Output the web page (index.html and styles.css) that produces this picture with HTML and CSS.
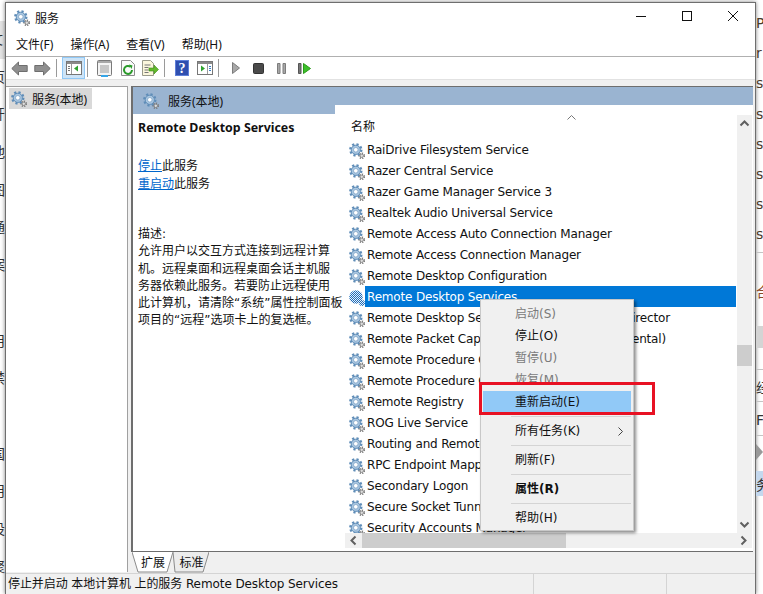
FILE: index.html
```html
<!DOCTYPE html>
<html lang="zh-CN">
<head>
    <meta charset="UTF-8">
    <title>服务</title>
    <link rel="stylesheet" href="styles.css">
</head>
<body>

    <svg class="defs" width="0" height="0">
        <defs>
            <pattern id="dither" width="2" height="2" patternUnits="userSpaceOnUse">
                <rect width="2" height="2" fill="#e8f1fa"/>
                <rect width="1" height="1" fill="#1d6bb8"/>
                <rect x="1" y="1" width="1" height="1" fill="#1d6bb8"/>
            </pattern>
            <symbol id="gear" viewBox="0 0 16 16">
                <circle cx="6.8" cy="6.8" r="5.4" fill="none" stroke="#5f8db8" stroke-width="2.6" stroke-dasharray="2.1 2.14"/>
                <circle cx="6.8" cy="6.8" r="4.6" fill="#a9c6e0" stroke="#5f8db8"/>
                <circle cx="6.800" cy="6.8" r="2.3" fill="#ffffff" stroke="#7fa3c6" stroke-width=".8"/>
                <circle cx="12.8" cy="12.8" r="2.6" fill="none" stroke="#7c7c7c" stroke-width="1.5" stroke-dasharray="1.2 1.2"/>
                <circle cx="12.8" cy="12.8" r="1.7" fill="#dcdcdc" stroke="#707070" stroke-width=".7"/>
            </symbol>
            <symbol id="gear-sel" viewBox="0 0 16 16">
                <circle cx="7" cy="7" r="6.800" fill="url(#dither)"/>
                <circle cx="13" cy="13" r="3" fill="url(#dither)"/>
            </symbol>
        </defs>
    </svg>

    <div class="desk">
        <div class="strip-left">
            <span class="band">文</span><span>页</span><span>开</span><span>他</span><span>图</span><span>通</span><span>案</span><span>&nbsp;</span><span>用</span><span>禁</span><span>&nbsp;</span><span>国</span><span>用</span><span>设</span><span>聚</span>
        </div>

        <div class="window">
            <div class="titlebar">
                <svg class="icon"><use href="#gear"/></svg>
                <span class="title">服务</span>
                <div class="caption">
                    <svg width="46" height="20" viewBox="0 0 46 20"><path d="M18 10.5h10" stroke="#111" fill="none"/></svg>
                    <svg width="46" height="20" viewBox="0 0 46 20"><rect x="18.5" y="5.5" width="9" height="9" stroke="#111" fill="none"/></svg>
                    <svg width="46" height="20" viewBox="0 0 46 20"><path d="M18 5l10 10M28 5l-10 10" stroke="#111" fill="none"/></svg>
                </div>
            </div>

            <div class="menubar">
                <span>文件(F)</span>
                <span>操作(A)</span>
                <span>查看(V)</span>
                <span>帮助(H)</span>
            </div>

            <div class="toolbar">
                <span class="tool"><svg width="17" height="15" viewBox="0 0 17 15"><path d="M.8 7.5L7.5 1v3.5h8.7v6H7.5V14z" fill="#8f8f8f" stroke="#6e6e6e"/></svg></span>
                <span class="tool"><svg width="17" height="15" viewBox="0 0 17 15"><path d="M16.2 7.5L9.5 1v3.5H.8v6h8.700V14z" fill="#8f8f8f" stroke="#6e6e6e"/></svg></span>
                <span class="tool-sep"></span>
                <span class="tool active"><svg width="16" height="14" viewBox="0 0 16 14"><rect x=".5" y=".5" width="15" height="13" fill="#fff" stroke="#777"/><path d="M1 1h14v2H1z" fill="#8a8a8a"/><path d="M5.500 3v10" stroke="#999"/><path d="M2 5.500h2M2 7.500h2M2 9.500h2" stroke="#777"/><path d="M12 4.500v6L8 7.500z" fill="#2ea32e"/></svg></span>
                <span class="tool-sep"></span>
                <span class="tool"><svg width="15" height="17" viewBox="0 0 15 17"><rect x=".5" y=".5" width="14" height="15" rx="1" fill="#f4f4f4" stroke="#7a7a7a"/><path d="M1 1h13v2H1z" fill="#a8a8a8"/><path d="M3 6h9M3 8h9M3 10h9M3 12h9" stroke="#9a9a9a"/><path d="M4 15h7v2H4z" fill="#37a6e8"/></svg></span>
                <span class="tool"><svg width="14" height="16" viewBox="0 0 14 16"><path d="M.5.500h9l4 4v11H.5z" fill="#fafafa" stroke="#8c8c8c"/><path d="M11 10a4 4 0 1 1-1.500-3.200" fill="none" stroke="#2a9a2a" stroke-width="2"/><path d="M8 4.500l3.500 1-1 3.500z" fill="#2a9a2a"/></svg></span>
                <span class="tool"><svg width="17" height="16" viewBox="0 0 17 16"><path d="M.5.500h8l3 3v12H.5z" fill="#fbf6dc" stroke="#9a9a8a"/><path d="M2.500 5h6M2.500 7.500h4M2.500 10h4M2.500 12.500h4" stroke="#777"/><path d="M7 8h5V5l4.500 4.500L12 14v-3H7z" fill="#63b82d" stroke="#3f8f1a" stroke-width=".6"/></svg></span>
                <span class="tool-sep"></span>
                <span class="tool"><svg width="14" height="16" viewBox="0 0 14 16"><rect width="14" height="16" fill="#2f4fb0"/><rect x=".5" y=".5" width="13" height="15" fill="none" stroke="#5f7fd8"/><text class="help-mark" x="7" y="13">?</text></svg></span>
                <span class="tool"><svg width="16" height="14" viewBox="0 0 16 14"><rect x=".5" y=".5" width="15" height="13" fill="#fff" stroke="#777"/><path d="M1 1h14v2H1z" fill="#8a8a8a"/><path d="M10.500 3v10" stroke="#999"/><path d="M12 5.500h2M12 7.500h2M12 9.500h2" stroke="#3b7fc4"/><path d="M4 4.500v6l4-3z" fill="#2ea32e"/></svg></span>
                <span class="tool-sep"></span>
                <span class="tool"><svg width="8" height="12" viewBox="0 0 8 12"><path d="M.5.500L7.500 6 .5 11.500z" fill="#a8a8a8" stroke="#7c7c7c"/></svg></span>
                <span class="tool"><svg width="11" height="11" viewBox="0 0 11 11"><rect x=".5" y=".5" width="10" height="10" rx="1" fill="#4a4a4a" stroke="#333"/></svg></span>
                <span class="tool"><svg width="9" height="11" viewBox="0 0 9 11"><path d="M.5.500h2.500v10H.5zM6 .500h2.500v10H6z" fill="#a8a8a8" stroke="#7c7c7c"/></svg></span>
                <span class="tool"><svg width="13" height="11" viewBox="0 0 13 11"><path d="M.5.500h2.500v10H.5z" fill="#777" stroke="#555"/><path d="M5.500.500L12.500 5.500 5.500 10.500z" fill="#3cc02a" stroke="#2a9a1a"/></svg></span>
            </div>

            <div class="main">
                <div class="tree">
                    <div class="tree-item">
                        <svg class="icon"><use href="#gear"/></svg>
                        <span>服务(本地)</span>
                    </div>
                </div>

                <div class="panel">
                    <div class="view">
                        <div class="desc">
                            <div class="view-head">
                                <svg class="icon"><use href="#gear"/></svg>
                                <span>服务(本地)</span>
                            </div>
                            <div class="desc-body">
                                <h2>Remote Desktop Services</h2>
                                <div class="actions">
                                    <div><a href="#">停止</a>此服务</div>
                                    <div><a href="#">重启动</a>此服务</div>
                                </div>
                                <p>描述:<br>允许用户以交互方式连接到远程计算<br>机。远程桌面和远程桌面会话主机服<br>务器依赖此服务。若要防止远程使用<br>此计算机，请清除“系统”属性控制面板<br>项目的“远程”选项卡上的复选框。</p>
                            </div>
                        </div>

                        <div class="services">
                            <div class="services-top"></div>
                            <div class="services-grid">
                                <div class="list">
                                    <div class="list-head">
                                        名称
                                        <svg class="sort" width="9" height="5" viewBox="0 0 9 5"><path d="M.5 4.500l4-4 4 4" fill="none" stroke="#777"/></svg>
                                    </div>
                                    <div class="row"><svg class="icon"><use href="#gear"/></svg><span class="name">RaiDrive Filesystem Service</span></div>
                                    <div class="row"><svg class="icon"><use href="#gear"/></svg><span class="name">Razer Central Service</span></div>
                                    <div class="row"><svg class="icon"><use href="#gear"/></svg><span class="name">Razer Game Manager Service 3</span></div>
                                    <div class="row"><svg class="icon"><use href="#gear"/></svg><span class="name">Realtek Audio Universal Service</span></div>
                                    <div class="row"><svg class="icon"><use href="#gear"/></svg><span class="name">Remote Access Auto Connection Manager</span></div>
                                    <div class="row"><svg class="icon"><use href="#gear"/></svg><span class="name">Remote Access Connection Manager</span></div>
                                    <div class="row"><svg class="icon"><use href="#gear"/></svg><span class="name">Remote Desktop Configuration</span></div>
                                    <div class="row selected"><svg class="icon"><use href="#gear-sel"/></svg><span class="name">Remote Desktop Services</span></div>
                                    <div class="row"><svg class="icon"><use href="#gear"/></svg><span class="name">Remote Desktop Services UserMode Port Redirector</span></div>
                                    <div class="row"><svg class="icon"><use href="#gear"/></svg><span class="name">Remote Packet Capture Protocol v.0 (experimental)</span></div>
                                    <div class="row"><svg class="icon"><use href="#gear"/></svg><span class="name">Remote Procedure Call (RPC)</span></div>
                                    <div class="row"><svg class="icon"><use href="#gear"/></svg><span class="name">Remote Procedure Call (RPC) Locator</span></div>
                                    <div class="row"><svg class="icon"><use href="#gear"/></svg><span class="name">Remote Registry</span></div>
                                    <div class="row"><svg class="icon"><use href="#gear"/></svg><span class="name">ROG Live Service</span></div>
                                    <div class="row"><svg class="icon"><use href="#gear"/></svg><span class="name">Routing and Remote Access</span></div>
                                    <div class="row"><svg class="icon"><use href="#gear"/></svg><span class="name">RPC Endpoint Mapper</span></div>
                                    <div class="row"><svg class="icon"><use href="#gear"/></svg><span class="name">Secondary Logon</span></div>
                                    <div class="row"><svg class="icon"><use href="#gear"/></svg><span class="name">Secure Socket Tunneling Protocol Service</span></div>
                                    <div class="row"><svg class="icon"><use href="#gear"/></svg><span class="name">Security Accounts Manager</span></div>
                                </div>

                                <div class="vscroll">
                                    <svg class="chev" width="15" height="17" viewBox="0 0 15 17"><path d="M3.500 10.500l4-4 4 4" fill="none" stroke="#606060" stroke-width="2"/></svg>
                                    <div class="vtrack-a"></div>
                                    <div class="vthumb"></div>
                                    <div class="vtrack-b"></div>
                                    <svg class="chev" width="15" height="17" viewBox="0 0 15 17"><path d="M3.500 6.500l4 4 4-4" fill="none" stroke="#606060" stroke-width="2"/></svg>
                                </div>

                                <div class="hscroll">
                                    <svg class="chev" width="17" height="15" viewBox="0 0 17 15"><path d="M10.500 3.500l-4 4 4 4" fill="none" stroke="#606060" stroke-width="2"/></svg>
                                    <div class="hthumb"></div>
                                    <div class="htrack"></div>
                                    <svg class="chev" width="17" height="15" viewBox="0 0 17 15"><path d="M6.500 3.500l4 4-4 4" fill="none" stroke="#606060" stroke-width="2"/></svg>
                                </div>
                            </div>
                        </div>
                    </div>

                    <div class="tabs">
                        <div class="tab tab-ext">
                            <svg width="41" height="21" viewBox="0 0 41 21"><path d="M0 0l6 20h29l6-20" fill="#fff" stroke="#8a8a8a"/></svg>
                            <span>扩展</span>
                        </div>
                        <div class="tab tab-std">
                            <svg width="36" height="21" viewBox="0 0 36 21"><path d="M0 0l2 20h28l6-20" fill="#ececec" stroke="#8a8a8a"/></svg>
                            <span>标准</span>
                        </div>
                    </div>
                </div>
            </div>

            <div class="statusbar">
                <span class="status-text">停止并启动 本地计算机 上的服务 Remote Desktop Services</span>
                <span class="status-cell"></span>
                <span class="status-cell"></span>
            </div>
        </div>

        <div class="strip-right">
            <div class="letters">
                <span>P</span><span>r</span><span>s</span><span>s</span><span>s</span><span>s</span><span>s</span><span>s</span>
            </div>
            <div class="seg seg-a"><span class="brown">合</span></div>
            <div class="seg seg-band"></div>
            <div class="seg seg-gap"></div>
            <div class="seg seg-b"><span>经</span></div>
            <div class="seg seg-c"><span>F</span></div>
            <div class="seg seg-d"><svg width="7" height="16" viewBox="0 0 7 16"><path d="M0 0l7 8-7 8z" fill="#999"/></svg></div>
            <div class="seg seg-e"><span>务</span></div>
        </div>
    </div>

    <!-- context menu -->
    <div class="ctx">
        <div class="ctx-item off">启动(S)</div>
        <div class="ctx-item">停止(O)</div>
        <div class="ctx-item off">暂停(U)</div>
        <div class="ctx-item off">恢复(M)</div>
        <div class="ctx-item hot">重新启动(E)</div>
        <div class="ctx-sep"></div>
        <div class="ctx-item">所有任务(K)<svg class="ctx-arrow" width="5" height="9" viewBox="0 0 5 9"><path d="M.5.500l4 4-4 4" fill="none" stroke="#444"/></svg></div>
        <div class="ctx-sep"></div>
        <div class="ctx-item">刷新(F)</div>
        <div class="ctx-sep"></div>
        <div class="ctx-item bold">属性(R)</div>
        <div class="ctx-sep"></div>
        <div class="ctx-item">帮助(H)</div>
    </div>
    <div class="redbox"></div>

</body>
</html>
```

FILE: styles.css
```css
:root {
    --face: #f0f0f0;
    --head: #9ab4d1;
    --line: #6e6e6e;
    --select: #0078d7;
    --ui-font: "DejaVu Sans", "Noto Sans CJK SC", sans-serif;
    --cjk-font: "Noto Sans", "Noto Sans CJK SC", sans-serif;
}

* {
    box-sizing: border-box;
}

html, body {
    margin: 0;
    height: 100%;
    overflow: hidden;
}

body {
    position: relative;
    background: #fff;
    color: #111;
    font-family: var(--ui-font);
    font-size: 12px;
}

.defs {
    position: absolute;
}

.icon {
    width: 16px;
    height: 16px;
    flex: none;
}

.desk {
    display: flex;
    height: 100%;
}

/* bits of the desktop behind the window */
.strip-left {
    width: 5px;
    flex: none;
    padding-top: 21px;
    display: flex;
    flex-direction: column;
    align-items: flex-end;
    font-size: 14px;
    color: #333;
}

.strip-left span {
    height: 37.7px;
    line-height: 37.7px;
    flex: none;
}

.strip-left .band {
    background: #e4e4e4;
    width: 16px;
}

.strip-right {
    flex: 1;
    min-width: 0;
    overflow: hidden;
    font-size: 14px;
    color: #333;
}

.letters {
    padding-top: 8px;
    height: 252px;
    display: flex;
    flex-direction: column;
}

.letters span {
    height: 30.200px;
    line-height: 30px;
    color: #4a3a2a;
}

.seg {
    border-top: 1px solid #c4c4c4;
}

.seg-a { height: 74px; padding-top: 28px; }
.seg-a .brown { color: #8a4a2a; }
.seg-band { height: 22px; background: #d4d4d4; border-top: none; }
.seg-gap { height: 21px; border-top: none; }
.seg-b { height: 32px; line-height: 36px; }
.seg-c { height: 34px; line-height: 36px; }
.seg-d { height: 36px; padding-top: 8px; }
.seg-e { height: 25px; background: #c4d8ee; border-top: none; line-height: 28px; }

.window {
    width: 751px;
    margin-top: 2px;
    flex: none;
    display: flex;
    flex-direction: column;
    background: #fff;
    border: 1px solid var(--line);
    border-bottom: none;
    box-shadow: 0 0 4px rgba(0, 0, 0, 0.5);
}

.titlebar {
    height: 30px;
    flex: none;
    display: flex;
    align-items: center;
    padding-left: 8px;
}

.title {
    margin-left: 5px;
    margin-top: -2px;
}

.caption {
    margin-left: auto;
    display: flex;
    margin-right: -1px;
}

.caption svg {
    margin-top: -5px;
}

.menubar {
    height: 24px;
    flex: none;
    display: flex;
    padding: 0 2px;
    line-height: 24px;
    font-family: var(--cjk-font);
    border-bottom: 1px solid #b0b0b0;
}

.menubar span {
    padding: 0 8px;
    margin-right: 1px;
}

.toolbar {
    height: 23px;
    flex: none;
    display: flex;
    align-items: stretch;
    padding-left: 2px;
    border-bottom: 1px solid #e2e2e2;
}

.tool {
    width: 23px;
    flex: none;
    display: flex;
    align-items: center;
    justify-content: center;
}

.tool.active {
    background: #cde4f7;
    border: 1px solid #90c8f6;
}

.tool-sep {
    width: 1px;
    flex: none;
    margin: 2px 5px 2px 2px;
    background: #9a9a9a;
}

.help-mark {
    fill: #fff;
    font-family: "Liberation Serif", serif;
    font-size: 14px;
    font-weight: bold;
    text-anchor: middle;
}

.main {
    flex: 1;
    min-height: 0;
    display: flex;
    gap: 3px;
    padding: 6px 2px 0 0;
    background: var(--face);
}

.tree {
    width: 122px;
    flex: none;
    margin-bottom: 1px;
    padding: 1px 0 0 3px;
    background: #fff;
    border-top: 1px solid #a0a0a0;
    border-right: 1px solid #a0a0a0;
}

.tree-item {
    width: 83px;
    height: 21px;
    display: flex;
    align-items: center;
    gap: 5px;
    padding-left: 2px;
    background: #d9d9d9;
    font-family: var(--cjk-font);
}

.panel {
    flex: 1;
    min-width: 0;
    display: flex;
    flex-direction: column;
}

.view {
    height: 466px;
    flex: none;
    display: flex;
    background: #fff;
    border-top: 1px solid var(--line);
    border-left: 2px solid var(--line);
    border-bottom: 1px solid var(--line);
}

.desc {
    width: 202px;
    flex: none;
}

.view-head {
    height: 27px;
    display: flex;
    align-items: center;
    gap: 9px;
    padding: 0 0 0 10px;
    background: var(--head);
    font-family: var(--cjk-font);
}

.desc-body {
    padding: 0 0 0 5px;
    line-height: 17.300px;
}

.desc-body h2 {
    margin: 6px 0 0;
    font-family: "Noto Sans", sans-serif;
    font-size: 12.4px;
    font-weight: bold;
    line-height: 16px;
    white-space: nowrap;
}

.actions {
    margin-top: 21px;
    line-height: 18px;
}

.actions a {
    color: #0066cc;
}

.desc-body p {
    margin: 33px 0 0;
    white-space: nowrap;
}

.services {
    flex: 1;
    min-width: 0;
    display: flex;
    flex-direction: column;
}

.services-top {
    height: 18px;
    flex: none;
    background: var(--head);
    margin-right: 0;
}

.services-grid {
    flex: 1;
    min-height: 0;
    display: grid;
    grid-template-columns: 392px 15px;
    grid-template-rows: 418px 15px;
    padding: 10px 0 0 10px;
}

.list {
    overflow: hidden;
}

.list-head {
    position: relative;
    height: 24px;
    padding: 4px 0 0 6px;
    line-height: 16px;
}

.sort {
    position: absolute;
    left: 222px;
    top: 0;
}

.row {
    height: 21px;
    display: flex;
    align-items: center;
    padding-left: 4px;
    white-space: nowrap;
}

.row .icon {
    margin-top: 2px;
}

.name {
    flex: 1;
    height: 21px;
    line-height: 23px;
    padding-left: 2px;
    letter-spacing: -0.17px;
}

.row.selected .name {
    background: var(--select);
    color: #fff;
    margin-right: 1px;
}

.vscroll {
    display: flex;
    flex-direction: column;
    background: var(--face);
}

.vtrack-a {
    height: 213px;
    flex: none;
}

.vthumb {
    height: 21px;
    flex: none;
    background: #cdcdcd;
}

.vtrack-b {
    flex: 1;
}

.hscroll {
    grid-column: 1 / 3;
    display: flex;
    background: var(--face);
}

.hthumb {
    width: 204px;
    flex: none;
    background: #cdcdcd;
}

.htrack {
    flex: 1;
}

.chev {
    flex: none;
}

.tabs {
    height: 21px;
    flex: none;
    display: flex;
    padding-left: 1px;
}

.tab {
    position: relative;
    height: 21px;
    flex: none;
    padding-left: 1px;
    text-align: center;
    line-height: 23px;
}

.tab svg {
    position: absolute;
    left: 0;
    top: 0;
}

.tab span {
    position: relative;
}

.tab-ext { width: 41px; }
.tab-std { width: 36px; }

.statusbar {
    height: 21px;
    flex: none;
    display: flex;
    background: var(--face);
    border-top: 1px solid #d4d4d4;
    line-height: 20px;
}

.status-text {
    width: 528px;
    flex: none;
    padding-left: 2px;
    white-space: nowrap;
    overflow: hidden;
    letter-spacing: -0.09px;
    border-right: 1px solid #d4d4d4;
}

.status-cell {
    width: 133px;
    flex: none;
    border-right: 1px solid #d4d4d4;
}

.ctx {
    position: absolute;
    left: 480px;
    top: 299px;
    width: 154px;
    height: 232px;
    padding: 3px;
    background: var(--face);
    border: 1px solid #c8c8c8;
    box-shadow: 2px 2px 3px rgba(0, 0, 0, 0.45);
}

.ctx-item {
    position: relative;
    height: 22px;
    margin: 0 -1px;
    padding-left: 32px;
    line-height: 22px;
}

.ctx-item.off {
    color: #7a7a7a;
}

.ctx-item.hot {
    background: #91c9f7;
}

.ctx-item.bold {
    font-weight: bold;
}

.ctx-arrow {
    position: absolute;
    right: 8px;
    top: 7px;
}

.ctx-sep {
    height: 1px;
    margin: 3px -1px 3px 27px;
    background: #d4d4d4;
}

.redbox {
    position: absolute;
    left: 479px;
    top: 382px;
    width: 176px;
    height: 33px;
    border: 3px solid #e81123;
}
```
